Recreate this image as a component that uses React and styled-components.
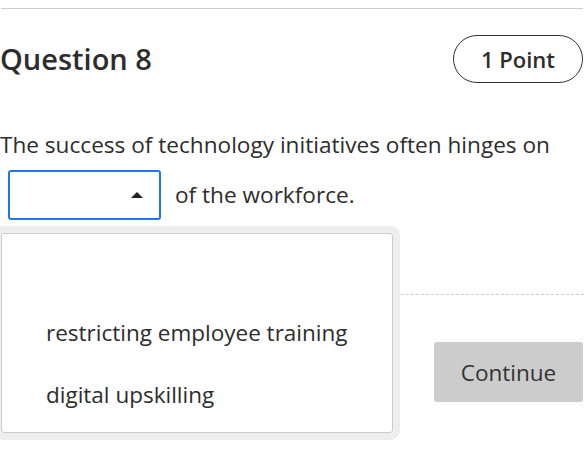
/* Libraries */
import React from 'react';
import styled, {createGlobalStyle} from 'styled-components';

const GlobalStyle = createGlobalStyle`
  html, body {
    margin: 0;
    padding: 0;
    background: #fff;
  }
  body {
    font-family: "Open Sans", "Liberation Sans", sans-serif;
    color: #2d2d2d;
  }
`;

const Page = styled.div`
  /* Display & Box Model */
  width: 584px;
  min-height: 462px;
  padding-top: 8px;
  box-sizing: border-box;
`;

const Rule = styled.hr`
  /* Display & Box Model */
  margin: 0 1px 0 1px;
  border: 0;
  border-top: 1px solid #cccccc;
`;

const Header = styled.div`
  /* Display & Box Model */
  display: flex;
  align-items: center;
  justify-content: space-between;
  margin-top: 26px;
`;

const Title = styled.h2`
  /* Display & Box Model */
  margin: 0;
  /* Text */
  font-size: 29px;
  font-weight: 600;
  line-height: 48px;
`;

const Points = styled.div`
  /* Display & Box Model */
  display: flex;
  align-items: center;
  justify-content: center;
  box-sizing: border-box;
  width: 130px;
  height: 48px;
  margin-right: 1px;
  border: 1px solid #333;
  border-radius: 24px;
  /* Text */
  font-size: 22px;
  font-weight: 600;
`;

const Prompt = styled.div`
  /* Display & Box Model */
  margin-top: 37px;
  /* Text */
  font-size: 22.6px;
  line-height: 50px;
`;

const SelectWrap = styled.span`
  /* Positioning */
  position: relative;
  /* Display & Box Model */
  display: inline-block;
  margin: 0 14px 0 8px;
  vertical-align: top;
`;

const SelectBox = styled.div`
  /* Display & Box Model */
  display: flex;
  align-items: center;
  justify-content: flex-end;
  box-sizing: border-box;
  width: 153px;
  height: 50px;
  padding-right: 16px;
  border: 2px solid #1f7ae6;
  border-radius: 3px;
  background: #fff;
`;

const Caret = styled.span`
  /* Display & Box Model */
  width: 0;
  height: 0;
  border-left: 6px solid transparent;
  border-right: 6px solid transparent;
  border-bottom: 6px solid #222;
`;

const Listbox = styled.ul`
  /* Positioning */
  position: absolute;
  top: 56px;
  left: -14px;
  z-index: 2;
  /* Display & Box Model */
  box-sizing: border-box;
  width: 406px;
  margin: 0;
  padding: 0;
  border: 7px solid #eeeeee;
  border-radius: 9px;
  list-style: none;
`;

const ListInner = styled.div`
  /* Display & Box Model */
  padding: 6px 0;
  border: 1px solid #cccccc;
  border-radius: 3px;
  background: #fff;
`;

const Option = styled.li`
  /* Display & Box Model */
  height: 62px;
  padding-left: 44px;
  /* Text */
  font-size: 22.5px;
  line-height: 62px;
  white-space: nowrap;
`;

const Divider = styled.div`
  /* Display & Box Model */
  margin-top: 74px;
  border-top: 1px dashed #cccccc;
`;

const Footer = styled.div`
  /* Display & Box Model */
  display: flex;
  justify-content: flex-end;
  margin-top: 47px;
`;

const ContinueButton = styled.button`
  /* Display & Box Model */
  width: 149px;
  height: 60px;
  margin-right: 1px;
  border: 0;
  border-radius: 3px;
  /* Style */
  background: #cccccc;
  color: #333;
  /* Text */
  font-family: inherit;
  font-size: 22.5px;
`;

const options = ['', 'restricting employee training', 'digital upskilling'];

const App = () =>
  <Page>
    <GlobalStyle/>
    <Rule/>
    <Header>
      <Title>Question 8</Title>
      <Points>1 Point</Points>
    </Header>
    <Prompt>
      The success of technology initiatives often hinges on
      <SelectWrap>
        <SelectBox>
          <Caret/>
        </SelectBox>
        <Listbox>
          <ListInner>
            {options.map(label =>
              <Option key={label || 'empty'}>{label}</Option>
            )}
          </ListInner>
        </Listbox>
      </SelectWrap>
      of the workforce.
    </Prompt>
    <Divider/>
    <Footer>
      <ContinueButton>Continue</ContinueButton>
    </Footer>
  </Page>

export default App;
